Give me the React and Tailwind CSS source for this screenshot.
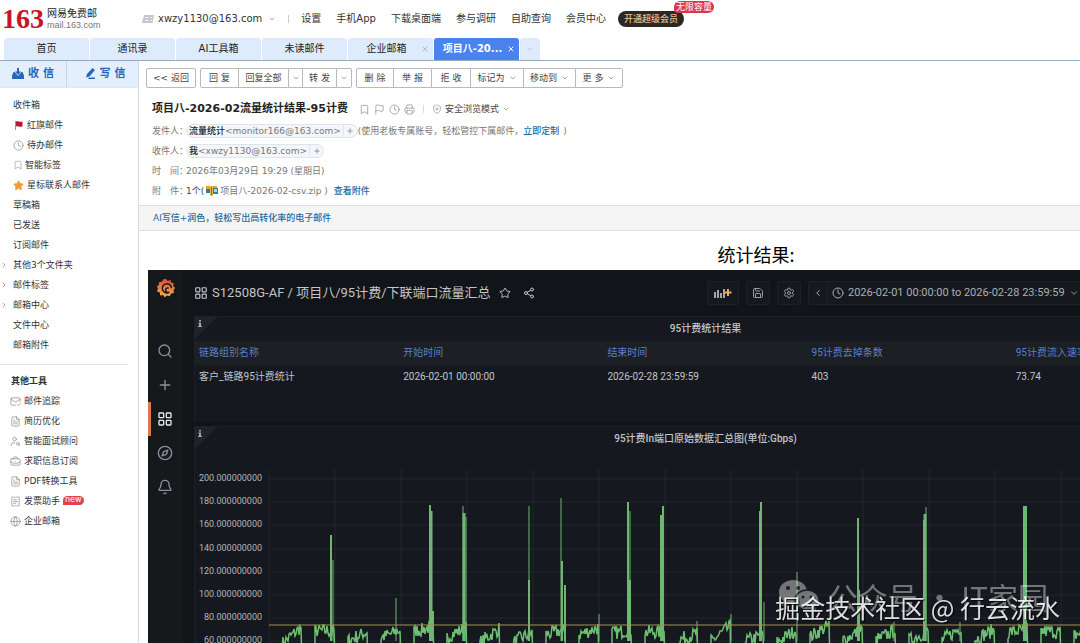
import {
	Bell,
	Bookmark,
	BriefcaseBusiness,
	ChevronDown,
	ChevronLeft,
	ChevronRight,
	Clock,
	Compass,
	FileText,
	Flag,
	Globe,
	LayoutGrid,
	MailCheck,
	Plus,
	Printer,
	ReceiptText,
	Save,
	Search,
	Settings,
	Share2,
	ShieldPlus,
	Star,
	UserSearch,
	X,
} from "lucide-react";

const topLinks = ["设置", "手机App", "下载桌面端", "参与调研", "自助查询", "会员中心"];

const tabs = [
	{ name: "首页" },
	{ name: "通讯录" },
	{ name: "AI工具箱" },
	{ name: "未读邮件" },
	{ name: "企业邮箱", closable: true },
	{ name: "项目八-20...", closable: true, current: true },
];

const folders = [
	{ name: "收件箱" },
	{ name: "红旗邮件", icon: RedFlagIcon },
	{ name: "待办邮件", icon: ClockIcon },
	{ name: "智能标签", icon: TagIcon },
	{ name: "星标联系人邮件", icon: StarIcon },
	{ name: "草稿箱" },
	{ name: "已发送" },
	{ name: "订阅邮件" },
	{ name: "其他3个文件夹", expandable: true },
	{ name: "邮件标签", expandable: true },
	{ name: "邮箱中心", expandable: true },
	{ name: "文件中心" },
	{ name: "邮箱附件" },
];

const tools = [
	{ name: "邮件追踪", icon: MailCheck },
	{ name: "简历优化", icon: FileText },
	{ name: "智能面试顾问", icon: UserSearch },
	{ name: "求职信息订阅", icon: BriefcaseBusiness },
	{ name: "PDF转换工具", icon: FileText },
	{ name: "发票助手", icon: ReceiptText, badge: "new" },
	{ name: "企业邮箱", icon: Globe },
];

const actionGroups = [
	[{ name: "<< 返回", width: "w-[48px]" }],
	[
		{ name: "回 复", width: "w-[38px]" },
		{ name: "回复全部", width: "w-[50px]" },
		{ label: "更多回复方式", width: "w-[14px]", arrow: true },
		{ name: "转 发", width: "w-[34px]" },
		{ label: "更多转发方式", width: "w-[14px]", arrow: true },
	],
	[
		{ name: "删 除", width: "w-[37px]" },
		{ name: "举 报", width: "w-[38px]" },
		{ name: "拒 收", width: "w-[39px]" },
		{ name: "标记为", width: "w-[53px]", arrow: true },
		{ name: "移动到", width: "w-[52px]", arrow: true },
		{ name: "更 多", width: "w-[46px]", arrow: true },
	],
];

const columns = ["链路组别名称", "开始时间", "结束时间", "95计费去掉条数", "95计费流入速率(Gbps)"];
const row = ["客户_链路95计费统计", "2026-02-01 00:00:00", "2026-02-28 23:59:59", "403", "73.74"];

// one entry per day: traffic level at the start and the end of the day, in Gbps
const days = [
	[58, 72], [69, 69], [61, 68], [63, 70], [69, 72], [64, 72], [59, 71],
	[59, 68], [66, 70], [66, 72], [67, 70], [68, 68], [61, 67], [60, 73],
	[60, 65], [59, 70], [64, 74], [61, 70], [61, 70], [61, 69], [61, 72],
	[62, 70], [68, 70], [69, 68], [65, 72],
];

// [x, peak in Gbps, line width]
const spikes = [
	[137, 152, 2], [139, 130, 1], [202, 97, 1],
	[236, 178, 2], [237, 172, 3], [239, 86, 2],
	[269, 177, 1], [270, 171, 3], [272, 167, 1],
	[335, 177, 1], [335, 113, 2],
	[367, 184, 1], [368, 129, 2], [371, 109, 2],
	[405, 84, 1],
	[434, 180, 2], [436, 172, 1], [436, 113, 2],
	[467, 169, 2], [469, 177, 2],
	[503, 78, 1], [537, 84, 1],
	[566, 172, 2], [567, 180, 2], [570, 94, 1],
	[603, 120, 1],
	[664, 166, 2], [665, 104, 2],
	[700, 77, 1],
	[730, 165, 2], [731, 170, 3], [732, 176, 1],
	[766, 77, 1],
	[830, 177, 2], [832, 177, 2],
];

function classNames(...classes) {
	return classes.filter(Boolean).join(" ");
}

export default function App() {
	return (
		<div className="flex h-screen flex-col overflow-hidden bg-white font-['DejaVu_Sans','Noto_Sans_CJK_SC',sans-serif] text-[9px] leading-4 text-[#333]">
			<Header />
			<Tabs />
			<div className="flex min-h-0 flex-1">
				<Sidebar />
				<main className="min-w-0 flex-1 overflow-hidden">
					<Toolbar />
					<MailInfo />
					<div className="border-y border-[#dedede] bg-[#f5f5f5] px-3.5 py-1">
						<a href="#" className="font-medium text-[#1f6a9e]">
							AI写信+润色，轻松写出高转化率的电子邮件
						</a>
					</div>
					<MailBody />
				</main>
			</div>
			<Watermark />
		</div>
	);
}

function Header() {
	return (
		<header className="flex h-[37px] shrink-0 items-center text-[10px] whitespace-nowrap">
			<a href="#" className="flex w-[142px] items-center gap-[3px] pl-[2px]">
				<span className="font-['Liberation_Serif',serif] text-[28px] leading-7 font-bold text-[#c8142b]">
					163
				</span>
				<span className="flex flex-col">
					<span className="leading-3 text-[#222]">网易免费邮</span>
					<span className="font-['Liberation_Sans',sans-serif] text-[9px] leading-[10px] text-[#777]">
						mail.163.com
					</span>
				</span>
			</a>
			<button type="button" className="flex items-center gap-1">
				<CardIcon />
				<span>xwzy1130@163.com</span>
				<ChevronDown className="ml-0.5 size-2 text-[#888]" aria-hidden="true" />
			</button>
			<span className="mx-3 h-2 w-px bg-[#ccc]" />
			<nav className="flex gap-[15px]">
				{topLinks.map((link) => (
					<a key={link} href="#">
						{link}
					</a>
				))}
			</nav>
			<div className="relative ml-3">
				<button
					type="button"
					className="block h-4 rounded-full bg-[#2a2826] px-1.5 text-[9px] font-medium text-[#e9bf8e]"
				>
					开通超级会员
				</button>
				<span className="absolute -top-2.5 left-14 h-3 rounded-t-md rounded-br-md rounded-bl-sm bg-[#d9364e] px-0.5 text-[9px] leading-3 text-white">
					无限容量
				</span>
			</div>
		</header>
	);
}

function Tabs() {
	return (
		<nav className="flex h-6 shrink-0 gap-px border-b border-[#97a9bd] pt-px pl-1 text-[10px] leading-[22px]">
			{tabs.map((tab) => (
				<div
					key={tab.name}
					className={classNames(
						tab.current ? "bg-[#4a83ee] font-bold text-white" : "bg-[#deebfc] text-[#222]",
						"flex w-[85px] items-center rounded-t-[3px]"
					)}
				>
					<a href="#" className={classNames(tab.closable && "pl-1", "flex-1 text-center whitespace-nowrap")}>
						{tab.name}
					</a>
					{tab.closable && (
						<button type="button" aria-label={`关闭 ${tab.name}`} className="mr-1">
							<X
								className={classNames(tab.current ? "text-white" : "text-[#b3bdca]", "size-2")}
								strokeWidth={3}
								aria-hidden="true"
							/>
						</button>
					)}
				</div>
			))}
			<button
				type="button"
				aria-label="更多标签页"
				className="flex w-5 items-center justify-center rounded-t-[3px] bg-[#deebfc]"
			>
				<ChevronDown className="size-2 text-[#b3bdca]" aria-hidden="true" />
			</button>
		</nav>
	);
}

function Sidebar() {
	return (
		<aside className="w-[139px] shrink-0 border-r border-[#cfdbe8]">
			<div className="flex h-[27px] border-b border-[#dbe8f6] bg-[#e3effd] text-[11px] font-bold text-[#2467bd]">
				<button type="button" className="flex w-[67px] items-center justify-center gap-1 border-r border-[#c3d6ec]">
					<ReceiveIcon />
					收 信
				</button>
				<button type="button" className="flex flex-1 items-center justify-center gap-1 pl-1">
					<ComposeIcon />
					写 信
				</button>
			</div>
			<ul className="mr-2.5 border-b border-[#e4e4e4] pt-[7px] pb-[9px]">
				{folders.map((folder) => (
					<li key={folder.name} className="flex h-5 items-center">
						<span className="w-[13px]">
							{folder.expandable && <ChevronRight className="size-2 text-[#777]" aria-hidden="true" />}
						</span>
						<a href="#" className="flex items-center gap-[3px]">
							{folder.icon && <folder.icon />}
							{folder.name}
						</a>
					</li>
				))}
			</ul>
			<h2 className="pt-2 pb-0.5 pl-[11px] font-bold">其他工具</h2>
			<ul className="pl-2.5">
				{tools.map((tool) => (
					<li key={tool.name} className="flex h-5 items-center gap-[3px]">
						<a href="#" className="flex items-center gap-[3px]">
							<tool.icon className="size-[11px] text-[#888]" strokeWidth={1.5} aria-hidden="true" />
							{tool.name}
						</a>
						{tool.badge && (
							<span className="mb-0.5 h-[9px] rounded-t-md rounded-br-md bg-[#dd4450] px-0.5 text-[8px] leading-[8px] text-white">
								{tool.badge}
							</span>
						)}
					</li>
				))}
			</ul>
		</aside>
	);
}

function Toolbar() {
	return (
		<div className="flex gap-1 pt-[7px] pl-[7px] text-[#444]">
			{actionGroups.map((group, i) => (
				<div key={i} className="flex divide-x divide-[#b9b9b9] rounded-[2px] border border-[#b9b9b9]">
					{group.map((action) => (
						<button
							key={action.name || action.label}
							type="button"
							aria-label={action.label}
							className={classNames(
								action.width,
								"flex h-[18px] items-center justify-center gap-1 whitespace-nowrap"
							)}
						>
							{action.name}
							{action.arrow && <ChevronDown className="size-2 shrink-0 text-[#777]" aria-hidden="true" />}
						</button>
					))}
				</div>
			))}
		</div>
	);
}

function MailInfo() {
	return (
		<section className="pt-3 pb-1 pl-[13px] whitespace-nowrap text-[#777]">
			<div className="flex h-[18px] items-center">
				<h1 className="text-[11px] font-bold text-[#222]">项目八-2026-02流量统计结果-95计费</h1>
				<div className="ml-[11px] flex gap-1">
					<IconButton label="标签" icon={Bookmark} />
					<IconButton label="旗标" icon={Flag} />
					<IconButton label="待办" icon={Clock} />
					<IconButton label="打印" icon={Printer} />
				</div>
				<span className="mx-2 h-2 w-px bg-[#ddd]" />
				<button type="button" className="flex items-center gap-[3px] text-[#444]">
					<ShieldPlus className="size-2.5 text-[#888]" strokeWidth={1.5} aria-hidden="true" />
					安全浏览模式
					<ChevronDown className="size-2 text-[#777]" aria-hidden="true" />
				</button>
			</div>
			<dl className="mt-[3px]">
				<InfoRow term="发件人：">
					<Contact name="流量统计" mail="monitor166@163.com" />
					<span>(使用老板专属账号，轻松管控下属邮件，</span>
					<a href="#" className="font-medium text-[#1f6a9e]">
						立即定制
					</a>
					<span className="ml-1">)</span>
				</InfoRow>
				<InfoRow term="收件人：">
					<Contact name="我" mail="xwzy1130@163.com" />
				</InfoRow>
				<InfoRow term={"时\u3000间："}>2026年03月29日 19:29 (星期日)</InfoRow>
				<InfoRow term={"附\u3000件："}>
					<span className="text-[#444]">1个(</span>
					<ZipIcon />
					<span>项目八-2026-02-csv.zip )</span>
					<a href="#" className="ml-1.5 font-medium text-[#1f6a9e]">
						查看附件
					</a>
				</InfoRow>
			</dl>
		</section>
	);
}

function IconButton({ label, icon: Icon }) {
	return (
		<button type="button" aria-label={label}>
			<Icon className="size-[11px] text-[#888]" strokeWidth={1.5} aria-hidden="true" />
		</button>
	);
}

function InfoRow({ term, children }) {
	return (
		<div className="flex h-5 items-center">
			<dt className="w-[34px]">{term}</dt>
			<dd className="flex items-center">{children}</dd>
		</div>
	);
}

function Contact({ name, mail }) {
	return (
		<span className="flex h-3.5 items-center rounded-full border border-[#dfe5ee] bg-[#f3f6fb] pl-0.5 leading-3">
			<span className="font-medium text-[#222]">{name}</span>
			<span>&lt;{mail}&gt;</span>
			<button
				type="button"
				aria-label="添加联系人"
				className="ml-0.5 flex h-3 w-3.5 items-center justify-center border-l border-[#dfe5ee]"
			>
				<Plus className="size-2" aria-hidden="true" />
			</button>
		</span>
	);
}

function MailBody() {
	return (
		<article className="w-[1225px] pt-2.5 pl-[9px]">
			<h2 className="pb-0.5 text-center font-['Noto_Sans_CJK_SC',sans-serif] text-[18px] leading-[27px] text-black">
				统计结果:
			</h2>
			<Dashboard />
		</article>
	);
}

function Dashboard() {
	return (
		<div className="flex h-[600px] w-[1076px] bg-[#111418] font-['Roboto','Noto_Sans_CJK_SC',sans-serif] text-[10px] text-[#c3c4c8]">
			<nav className="flex w-[35px] shrink-0 flex-col items-center bg-[#15191c] pt-2">
				<a href="#" aria-label="主页">
					<GrafanaLogo />
				</a>
				<div className="mt-9 flex w-full flex-col">
					<NavItem label="搜索" icon={Search} />
					<NavItem label="新建" icon={Plus} />
					<NavItem label="仪表盘" icon={LayoutGrid} current />
					<NavItem label="探索" icon={Compass} />
					<NavItem label="告警" icon={Bell} />
				</div>
			</nav>
			<div className="min-w-0 flex-1 pl-[11px]">
				<div className="flex h-[46px] items-center whitespace-nowrap">
					<div className="flex w-[513px] items-center gap-1">
						<LayoutGrid className="size-3.5" aria-hidden="true" />
						<h3 className="text-[13px]">S12508G-AF / 项目八/95计费/下联端口流量汇总</h3>
						<button type="button" aria-label="收藏" className="ml-1">
							<Star className="size-3" aria-hidden="true" />
						</button>
						<button type="button" aria-label="分享" className="ml-2">
							<Share2 className="size-3" aria-hidden="true" />
						</button>
					</div>
					<div className="flex gap-[7px]">
						<button
							type="button"
							aria-label="添加面板"
							className="flex h-6 w-8 items-center justify-center rounded-[2px] border border-[#1d2024] bg-[#15181c]"
						>
							<AddPanelIcon />
						</button>
						<button
							type="button"
							aria-label="保存"
							className="flex size-6 items-center justify-center rounded-[2px] border border-[#1d2024] bg-[#15181c]"
						>
							<Save className="size-3 text-[#9b9da3]" aria-hidden="true" />
						</button>
						<button
							type="button"
							aria-label="设置"
							className="flex size-6 items-center justify-center rounded-[2px] border border-[#1d2024] bg-[#15181c]"
						>
							<Settings className="size-3 text-[#9b9da3]" aria-hidden="true" />
						</button>
						<div className="flex rounded-[2px] border border-[#1d2024] bg-[#15181c]">
							<button type="button" aria-label="向前" className="flex w-[18px] items-center justify-center">
								<ChevronLeft className="size-2.5" aria-hidden="true" />
							</button>
							<button
								type="button"
								className="flex items-center gap-1 border-l border-[#1d2024] px-1 text-[11px] text-[#adafb5]"
							>
								<Clock className="size-3" aria-hidden="true" />
								2026-02-01 00:00:00 to 2026-02-28 23:59:59
								<ChevronDown className="size-2.5" aria-hidden="true" />
							</button>
						</div>
					</div>
				</div>
				<div className="flex w-[1022px] flex-col gap-1">
					<Panel title="95计费统计结果" height="h-[106px]">
						<table className="w-full table-fixed text-left">
							<thead>
								<tr className="h-6 bg-[#1c1f23] text-[#587fc9]">
									{columns.map((column) => (
										<th key={column} scope="col" className="pl-1 font-normal whitespace-nowrap">
											{column}
										</th>
									))}
								</tr>
							</thead>
							<tbody>
								<tr className="h-6">
									{row.map((cell) => (
										<td key={cell} className="pl-1">
											{cell}
										</td>
									))}
								</tr>
							</tbody>
						</table>
					</Panel>
					<Panel title="95计费In端口原始数据汇总图(单位:Gbps)" height="h-[440px]">
						<TrafficChart />
					</Panel>
				</div>
			</div>
		</div>
	);
}

function NavItem({ label, icon: Icon, current }) {
	return (
		<a
			href="#"
			aria-label={label}
			className={classNames(
				current ? "border-[#e0794a] text-[#e6e7ea]" : "border-transparent text-[#8d9096]",
				"flex h-[34px] items-center justify-center border-l-[3px] pr-1"
			)}
		>
			<Icon className="size-4" aria-hidden="true" />
		</a>
	);
}

function Panel({ title, height, children }) {
	return (
		<section className={classNames(height, "relative border-t border-l border-[#1d2126] bg-[#15181f]")}>
			<svg className="absolute top-0 left-0 size-[22px]" viewBox="0 0 22 22" aria-hidden="true">
				<path d="M0 0h22L0 22z" fill="#1f2428" />
				<path d="M4 3h2v1.500H4zM3.500 5.500H6V9h1v1H3V9h1V6.500h-.5z" fill="#a4a6ab" />
			</svg>
			<h4 className="py-1 text-center font-medium">{title}</h4>
			{children}
		</section>
	);
}

const toY = (gbps) => Math.round((200 - gbps) * 1.16) + 28;

function trafficPoints() {
	const points = [];
	let seed = 7;
	days.forEach(([from, to], day) => {
		const start = 88 + day * 33;
		points.push(`${start},${toY(40)}`);
		for (let i = 0; i <= 19; i++) {
			seed = (seed * 16807) % 2147483647;
			const noise = (seed / 2147483647 - 0.5) * 12;
			points.push(`${start + i},${toY(from + ((to - from) * i) / 19 + noise)}`);
		}
		points.push(`${start + 20},${toY(40)}`);
	});
	return points.join(" ");
}

function TrafficChart() {
	return (
		<svg className="-ml-px h-[320px] w-full" role="img" aria-label="95计费In端口原始数据汇总图">
			<g stroke="#22262b">
				{Array.from({ length: 15 }, (_, i) => (
					<line key={i} x1={75 + i * 66} x2={75 + i * 66} y1="18" y2="320" />
				))}
				{Array.from({ length: 9 }, (_, i) => (
					<line key={i} x1="75" x2="1022" y1={toY(200 - i * 20)} y2={toY(200 - i * 20)} />
				))}
			</g>
			<g fill="#b4b6bb" fontSize="9" textAnchor="end">
				{Array.from({ length: 9 }, (_, i) => (
					<text key={i} x="68" y={toY(200 - i * 20) + 2}>
						{(200 - i * 20).toFixed(9)}
					</text>
				))}
			</g>
			<polyline points={trafficPoints()} fill="none" stroke="#6fbf73" strokeWidth="1.5" />
			<g stroke="#6fb673">
				{spikes.map(([x, peak, width]) => (
					<line key={`${x}-${peak}`} x1={x} x2={x} y1={toY(peak)} y2={toY(60)} strokeWidth={width} />
				))}
			</g>
			<line x1="75" x2="1022" y1={toY(73.74)} y2={toY(73.74)} stroke="#a3944e" />
		</svg>
	);
}

function Watermark() {
	return (
		<div className="pointer-events-none fixed right-5 bottom-[19px] font-['Noto_Sans_CJK_SC',sans-serif] text-[25px] leading-[34px] whitespace-nowrap text-white">
			<div className="absolute right-3 bottom-2 flex items-center gap-2 text-[30px] leading-10 opacity-40">
				<WechatIcon />
				<span>公众号 · IT家园</span>
			</div>
			<div className="relative opacity-85 [text-shadow:1px_1px_1px_#000]">掘金技术社区 @ 行云流水</div>
		</div>
	);
}

function CardIcon() {
	return (
		<svg className="h-2.5 w-3" viewBox="0 0 12 10" aria-hidden="true">
			<path d="M2 1h10l-1.500 8H0z" fill="#c4c6c9" />
			<path d="M3.500 3.500h3M3 6.500h3M8.500 3.500h1.500M8 6.500h1.500" stroke="#fff" />
		</svg>
	);
}

function ReceiveIcon() {
	return (
		<svg className="size-3" viewBox="0 0 12 12" fill="#2467bd" aria-hidden="true">
			<path d="M5 0h2v3.500h2L6 7 3 3.500h2z" />
			<path d="M1.500 4h1.200L6 8l3.300-4h1.200L12 7.500V11H0V7.500z" />
		</svg>
	);
}

function ComposeIcon() {
	return (
		<svg className="size-3" viewBox="0 0 12 12" fill="#2467bd" aria-hidden="true">
			<path d="M8.500 0L11 2 5.500 8.500 2 9.500 3 6z" />
			<path d="M5 9.500h6V11H4z" />
		</svg>
	);
}

function RedFlagIcon() {
	return (
		<svg className="size-[11px]" viewBox="0 0 11 11" aria-hidden="true">
			<path d="M2.500 1v9" stroke="#999" />
			<path d="M3 1.500c2-1 3 .8 6.500 0v5C6 7.500 5 5.500 3 6.500z" fill="#b01c35" />
		</svg>
	);
}

function ClockIcon() {
	return <Clock className="size-[11px] text-[#888]" strokeWidth={1.5} aria-hidden="true" />;
}

function TagIcon() {
	return <Bookmark className="-mr-px size-2.5 text-[#999]" strokeWidth={1.5} aria-hidden="true" />;
}

function StarIcon() {
	return <Star className="size-[11px] fill-[#f0a030] text-[#f0a030]" aria-hidden="true" />;
}

function ZipIcon() {
	return (
		<svg className="mx-0.5 size-3" viewBox="0 0 12 12" aria-hidden="true">
			<path d="M0 1h11v3H0z" fill="#e0a336" />
			<path d="M0 4h4v4H0zM7 3h5v6H7z" fill="#2f7f9c" />
			<path d="M8 4h3v3H8z" fill="#a9d4de" />
			<path d="M4 1h3v10H4z" fill="#e9b84f" />
			<path d="M5 2h1v8H5z" fill="#8a6a2a" />
		</svg>
	);
}

function GrafanaLogo() {
	return (
		<svg className="size-5" viewBox="0 0 24 24" aria-hidden="true">
			<defs>
				<linearGradient id="grafana" x1="0" y1="0" x2="0" y2="1">
					<stop offset="0" stopColor="#e04a3c" />
					<stop offset="1" stopColor="#f6b04a" />
				</linearGradient>
			</defs>
			<path
				fill="url(#grafana)"
				d="M12 1l2 2.500 3.500-1 .5 3 3.500 1-1 3L23 12l-2 2.500.5 3.500-3.500.5-1.500 3.500-3-1L10.500 23 8.500 20.500 5 21l-.5-3.500L1 16l1.500-3L1 10l2.500-1.500L3.500 5l3.500-.5L9 1.500z"
			/>
			<path
				d="M18.500 11.500A5.500 5.500 0 1 0 16 17c-2.500 1-4.500-.5-4.500-2.500s1.500-3 3-2.500"
				fill="none"
				stroke="#15191c"
				strokeWidth="1.800"
				strokeLinecap="round"
			/>
		</svg>
	);
}

function AddPanelIcon() {
	return (
		<svg className="h-3 w-[18px]" viewBox="0 0 18 12" aria-hidden="true">
			<path d="M0 5h2v6H0zM3 3h2v8H3zM6 6h2v5H6zM9 2h2v9H9z" fill="#a5a7ac" />
			<path d="M14 2v7M10.500 5.500h7" stroke="#eeb04c" strokeWidth="2" />
		</svg>
	);
}

function WechatIcon() {
	return (
		<svg className="h-9 w-11" viewBox="0 0 44 36" aria-hidden="true">
			<ellipse cx="17" cy="14" rx="14" ry="12" fill="#fff" />
			<path d="M8 22l-2 6 7-3z" fill="#fff" />
			<ellipse cx="31" cy="22" rx="12" ry="10" fill="#fff" stroke="#222" strokeWidth="1.500" />
			<path d="M36 30l4 3-1-5z" fill="#fff" />
			<g fill="#222">
				<circle cx="12" cy="10" r="2" />
				<circle cx="22" cy="10" r="2" />
				<circle cx="27" cy="19" r="1.500" />
				<circle cx="35" cy="19" r="1.500" />
			</g>
		</svg>
	);
}
